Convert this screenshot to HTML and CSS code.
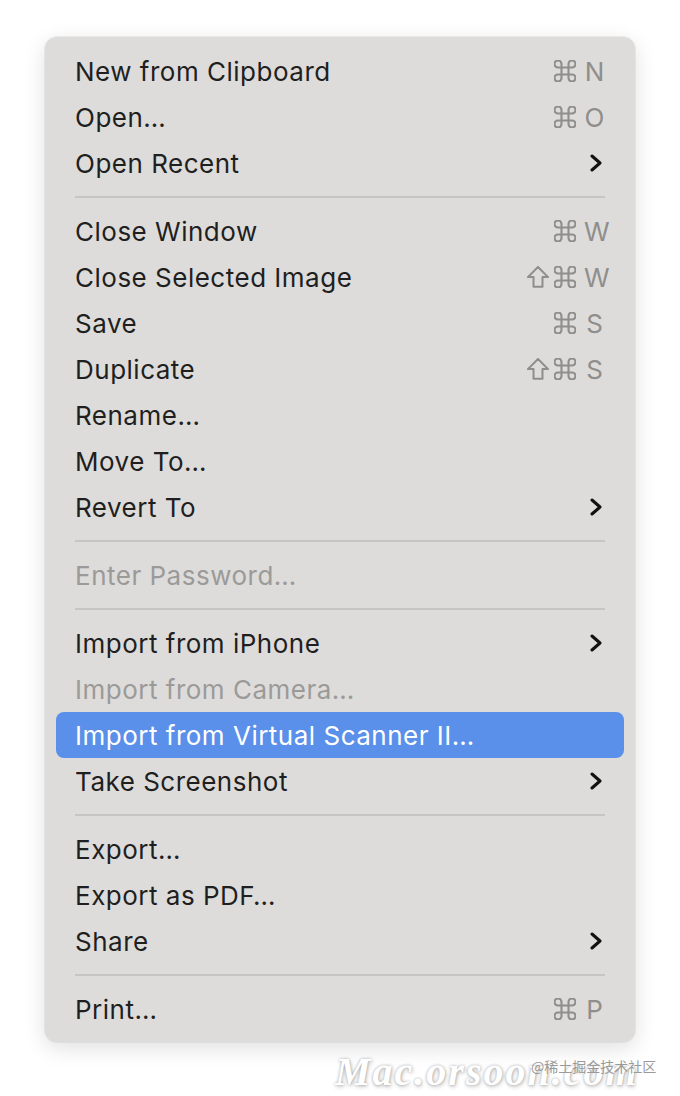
FILE: index.html
```html
<!DOCTYPE html>
<html>
<head>
<meta charset="utf-8">
<link rel="stylesheet" href="styles.css">
</head>
<body>
<svg width="0" height="0" class="defs">
  <defs>
    <symbol id="cmd" viewBox="2.6 2.6 18.8 18.8"><path d="M15 6v12a3 3 0 1 0 3-3H6a3 3 0 1 0 3 3V6a3 3 0 1 0-3 3h12a3 3 0 1 0-3-3"/></symbol>
    <symbol id="shift" viewBox="2.2 2.6 19.6 19.6"><path d="M12 3.5 L21 12.5 H16 V21 H8 V12.5 H3 Z"/></symbol>
    <symbol id="chev" viewBox="0 0 12 18"><polyline points="2,2 10,9 2,16"/></symbol>
  </defs>
</svg>
<div class="menu">
  <div class="row"><span class="label">New from Clipboard</span><span class="keys"><svg class="k"><use href="#cmd"/></svg><span class="l">N</span></span></div>
  <div class="row"><span class="label">Open…</span><span class="keys"><svg class="k"><use href="#cmd"/></svg><span class="l">O</span></span></div>
  <div class="row"><span class="label">Open Recent</span><svg class="chev"><use href="#chev"/></svg></div>
  <div class="sep"></div>
  <div class="row"><span class="label">Close Window</span><span class="keys"><svg class="k"><use href="#cmd"/></svg><span class="l">W</span></span></div>
  <div class="row"><span class="label">Close Selected Image</span><span class="keys"><svg class="k"><use href="#shift"/></svg><svg class="k"><use href="#cmd"/></svg><span class="l">W</span></span></div>
  <div class="row"><span class="label">Save</span><span class="keys"><svg class="k"><use href="#cmd"/></svg><span class="l">S</span></span></div>
  <div class="row"><span class="label">Duplicate</span><span class="keys"><svg class="k"><use href="#shift"/></svg><svg class="k"><use href="#cmd"/></svg><span class="l">S</span></span></div>
  <div class="row"><span class="label">Rename…</span></div>
  <div class="row"><span class="label">Move To…</span></div>
  <div class="row"><span class="label">Revert To</span><svg class="chev"><use href="#chev"/></svg></div>
  <div class="sep"></div>
  <div class="row disabled"><span class="label">Enter Password…</span></div>
  <div class="sep"></div>
  <div class="row"><span class="label">Import from iPhone</span><svg class="chev"><use href="#chev"/></svg></div>
  <div class="row disabled"><span class="label">Import from Camera…</span></div>
  <div class="row active"><span class="label">Import from Virtual Scanner II…</span></div>
  <div class="row"><span class="label">Take Screenshot</span><svg class="chev"><use href="#chev"/></svg></div>
  <div class="sep"></div>
  <div class="row"><span class="label">Export…</span></div>
  <div class="row"><span class="label">Export as PDF…</span></div>
  <div class="row"><span class="label">Share</span><svg class="chev"><use href="#chev"/></svg></div>
  <div class="sep"></div>
  <div class="row"><span class="label">Print…</span><span class="keys"><svg class="k"><use href="#cmd"/></svg><span class="l">P</span></span></div>
</div>
<div class="footer">
  <span class="mark">Mac.orsoon.com</span>
  <span class="credit">@稀土掘金技术社区</span>
</div>
</body>
</html>
```
FILE: styles.css
```css
html, body {
  margin: 0;
  padding: 0;
  background: #ffffff;
}
body {
  width: 680px;
  height: 1096px;
  overflow: hidden;
  font-family: Inter, "Liberation Sans", sans-serif;
}
.defs {
  position: absolute;
  width: 0;
  height: 0;
}
.menu {
  margin: 37px 0 0 45px;
  width: 590px;
  height: 1005px;
  box-sizing: border-box;
  padding: 11px 11px 10px;
  background: #dddcda;
  border-radius: 12px;
  box-shadow: 0 0 0 1px rgba(0,0,0,0.05), 0 6px 22px rgba(0,0,0,0.13);
  display: flex;
  flex-direction: column;
}
.row {
  height: 46px;
  flex: none;
  display: flex;
  align-items: center;
  justify-content: space-between;
  padding: 0 19px;
  border-radius: 8px;
  color: #1f1f1f;
  font-size: 26px;
  letter-spacing: 0.5px;
}
.row.disabled { color: #9b9a98; }
.row.active {
  background: #5a8fea;
  color: #ffffff;
}
.sep {
  height: 22px;
  flex: none;
  display: flex;
  align-items: center;
  padding: 0 19px;
}
.sep::before {
  content: "";
  display: block;
  width: 100%;
  height: 2px;
  background: #c6c5c3;
}
.keys {
  display: flex;
  align-items: center;
  gap: 5px;
  color: #8f8e8c;
}
.k {
  width: 22px;
  height: 22px;
  fill: none;
  stroke: #8f8e8c;
  stroke-width: 1.8;
  stroke-linejoin: round;
}
.l {
  font-size: 26px;
  width: 21px;
  margin-left: 3px;
  text-align: center;
  letter-spacing: 0;
}
.chev {
  width: 12px;
  height: 18px;
  margin-right: 3px;
  fill: none;
  stroke: #111;
  stroke-width: 3;
  stroke-linecap: round;
  stroke-linejoin: round;
}
.footer {
  position: relative;
  height: 54px;
}
.mark {
  position: absolute;
  left: 335px;
  top: 6px;
  font-family: "Liberation Serif", serif;
  font-style: italic;
  font-weight: bold;
  font-size: 40px;
  letter-spacing: 2px;
  color: #ffffff;
  text-shadow: 0 0 3px rgba(0,0,0,0.3), 1px 2px 4px rgba(0,0,0,0.2);
}
.credit {
  position: absolute;
  left: 531px;
  top: 14px;
  font-family: "Noto Sans CJK SC", sans-serif;
  font-size: 14px;
  color: #9a9a9a;
}
```
